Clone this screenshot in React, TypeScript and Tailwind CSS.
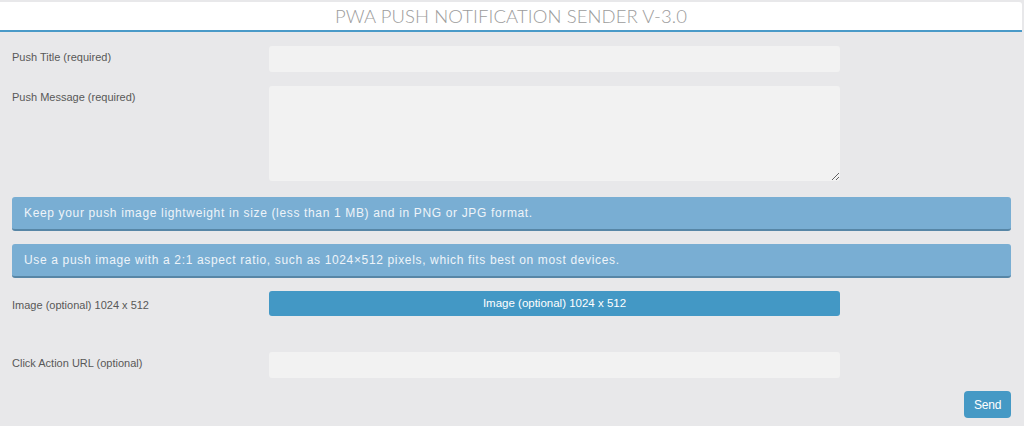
import { useState } from 'react';

const labelClass =
  "w-[257px] shrink-0 text-[11px] text-[#585858] font-['Liberation_Sans',Arial,sans-serif]";
const fieldClass = 'w-[571px] bg-[#f2f2f2] rounded-[3px] outline-none px-2 text-[12px] text-[#333]';

const Notice = ({ children }: { children: React.ReactNode }) => (
  <div className="h-[34px] flex items-center px-3 rounded-[3px] bg-[#79aed3] border-b-2 border-[#5786a6] text-[12px] tracking-[0.65px] text-[#eef4f9] font-['Liberation_Sans',Arial,sans-serif]">
    {children}
  </div>
);

export default function App() {
  const [title, setTitle] = useState('');
  const [message, setMessage] = useState('');
  const [url, setUrl] = useState('');

  return (
    <div className="min-h-[426px] bg-[#e8e8ea] pt-[2px] font-['Liberation_Sans',Arial,sans-serif]">
      <div className="h-[30px] mr-[2px] bg-white rounded-tr-[3px] border-b-2 border-[#4a9ac8] flex items-center justify-center">
        <h1 className="pt-[1px] text-[18.5px] font-light tracking-[0.1px] text-[#9c9c9c] font-['Lato',sans-serif]">
          PWA PUSH NOTIFICATION SENDER V-3.0
        </h1>
      </div>

      <div className="pl-[12px] pr-[13px] pt-[14px] flex flex-col">
        <div className="flex">
          <label className={`${labelClass} pt-[3px]`}>Push Title (required)</label>
          <input
            value={title}
            onChange={(e) => setTitle(e.target.value)}
            className={`${fieldClass} h-[26px]`}
          />
        </div>

        <div className="flex mt-[14px]">
          <label className={`${labelClass} pt-[3px]`}>Push Message (required)</label>
          <textarea
            value={message}
            onChange={(e) => setMessage(e.target.value)}
            className={`${fieldClass} h-[95px] py-1 resize`}
          />
        </div>

        <div className="mt-[16px] flex flex-col gap-[13px]">
          <Notice>Keep your push image lightweight in size (less than 1 MB) and in PNG or JPG format.</Notice>
          <Notice>Use a push image with a 2:1 aspect ratio, such as 1024×512 pixels, which fits best on most devices.</Notice>
        </div>

        <div className="flex mt-[13px]">
          <label className={`${labelClass} pt-[6px]`}>Image (optional) 1024 x 512</label>
          <button className="w-[571px] h-[25px] rounded-[3px] bg-[#4398c5] text-white text-[11.5px]">
            Image (optional) 1024 x 512
          </button>
        </div>

        <div className="flex mt-[36px]">
          <label className={`${labelClass} pt-[3px]`}>Click Action URL (optional)</label>
          <input
            value={url}
            onChange={(e) => setUrl(e.target.value)}
            className={`${fieldClass} h-[26px]`}
          />
        </div>

        <div className="flex justify-end mt-[13px]">
          <button className="w-[47px] h-[27px] rounded-[4px] bg-[#4599c5] text-white text-[12px] tracking-[-0.2px]">
            Send
          </button>
        </div>
      </div>
    </div>
  );
}
